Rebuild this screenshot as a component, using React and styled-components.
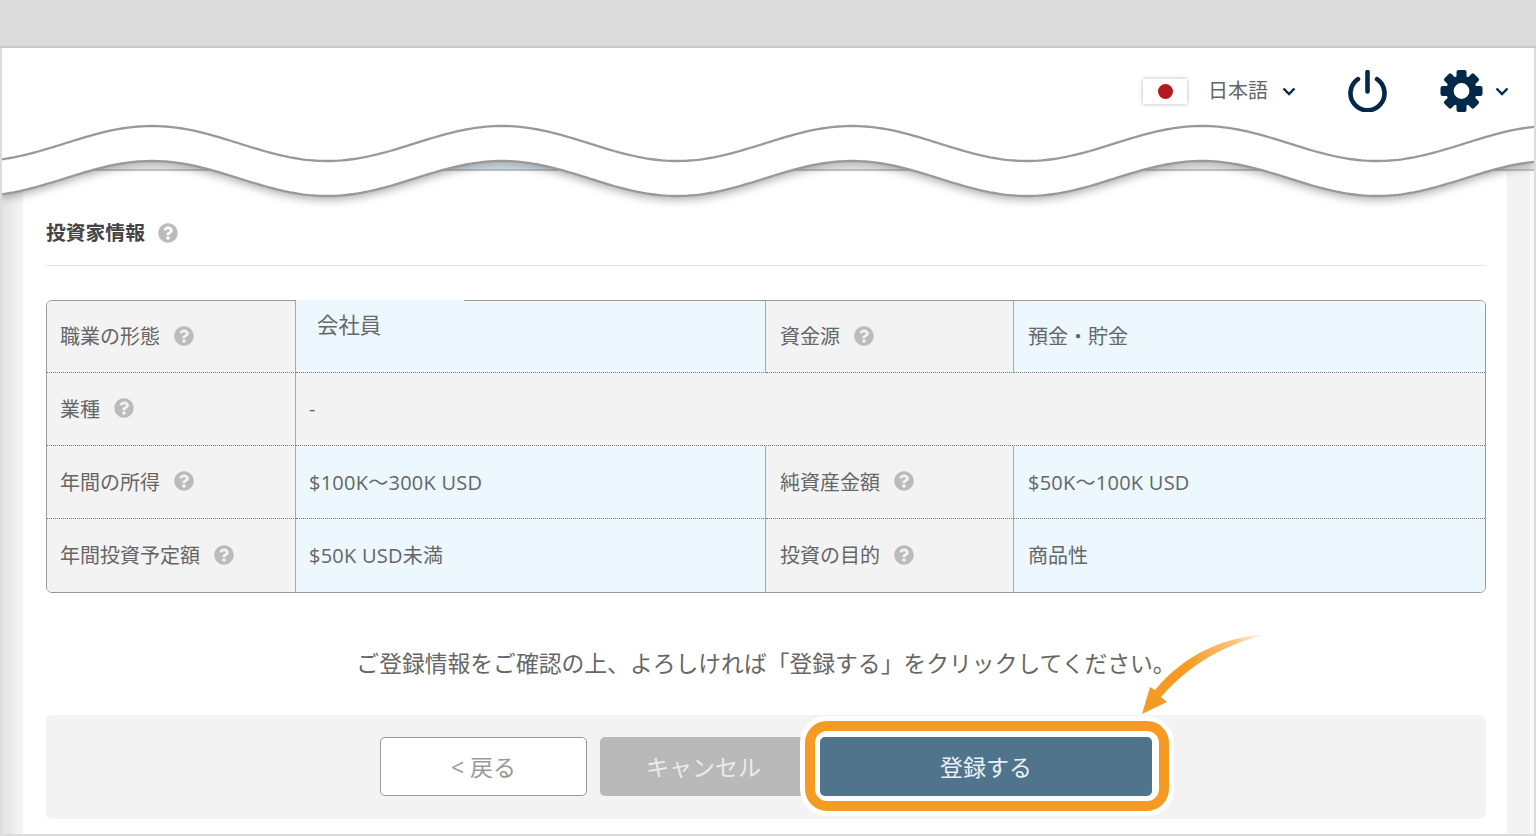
import React from 'react';
import styled, { createGlobalStyle } from 'styled-components';
import { FaQuestionCircle } from 'react-icons/fa';

const COLORS = {
  frame: '#dcdcdc',
  navy: '#03294a',
  text: '#666666',
  label: '#f3f3f3',
  value: '#ecf7fe',
  line: '#999999',
  orange: '#f59b23',
  primary: '#50748c',
};

const GlobalStyle = createGlobalStyle`
  html, body { margin: 0; padding: 0; background: #fff; }
  body {
    font-family: "Open Sans", "Noto Sans CJK JP", sans-serif;
    color: ${COLORS.text};
  }
`;

const Frame = styled.div`
  position: relative;
  width: 1536px;
  height: 836px;
  overflow: hidden;
  display: flex;
  flex-direction: column;
  background: ${COLORS.frame};
`;
const TopBar = styled.div`
  height: 46px;
  flex: none;
  background: ${COLORS.frame};
  border-bottom: 2px solid #c9c9c9;
`;
const Window = styled.div`
  flex: 1;
  margin: 0 2px 2px;
  display: flex;
  flex-direction: column;
  background: #fff;
`;
const Header = styled.header`
  height: 123px;
  flex: none;
  display: flex;
  justify-content: flex-end;
  align-items: flex-start;
  padding-right: 25px;
  background: #fff;
`;
const Controls = styled.div`
  height: 86px;
  display: flex;
  align-items: center;
`;
const Flag = styled.div`
  width: 44px;
  height: 25px;
  display: flex;
  align-items: center;
  justify-content: center;
  background: #fff;
  box-shadow: 0 0 4px rgba(0, 0, 0, 0.3);
  &::after {
    content: '';
    width: 15px;
    height: 15px;
    border-radius: 50%;
    background: #b5181e;
  }
`;
const Lang = styled.span`
  margin: 0 14px 0 21px;
  font-size: 20px;
  line-height: 26px;
  color: ${COLORS.text};
`;
const IconSlot = styled.span`
  display: flex;
  margin-left: ${(p) => p.$left}px;
`;
const Main = styled.main`
  flex: 1;
  display: flex;
  padding: 0 27px 0 21px;
  background: linear-gradient(90deg, #e2e2e2 0, #f3f3f3 18px, #f3f3f3 1528px, #fafafa 1528px);
`;
const Panel = styled.section`
  flex: 1;
  padding: 47px 21px 15px 23px;
  background: #fff;
`;
const Title = styled.h2`
  margin: 0 0 34px;
  height: 47px;
  display: flex;
  align-items: flex-start;
  gap: 13px;
  border-bottom: 1px solid #e4e4e4;
  font-size: 19.8px;
  line-height: 30px;
  font-weight: 700;
  color: #444444;
  svg { margin-top: 5px; }
`;
const Table = styled.table`
  width: 1440px;
  table-layout: fixed;
  border-collapse: separate;
  border-spacing: 0;
  border: 1px solid ${COLORS.line};
  border-radius: 6px;
  font-size: 20px;
  tr:first-child td { height: 72px; }
`;
const Cell = styled.td`
  position: relative;
  height: 73px;
  box-sizing: border-box;
  padding: 0 14px 2px;
  color: ${COLORS.text};
  border-bottom: 1px dotted #777;
  tr:last-child & { border-bottom: 0; }
  &:not(:last-child) { border-right: 1px solid #aaaaaa; }
  &:nth-child(1), &:nth-child(2) { padding-left: 13px; }
`;
const LabelCell = styled(Cell)`
  background: ${COLORS.label};
  tr:first-child &:first-child { border-top-left-radius: 5px; }
  tr:last-child &:first-child { border-bottom-left-radius: 5px; }
`;
const ValueCell = styled(Cell)`
  letter-spacing: ${(p) => (p.$latin ? '0.25px' : '0')};
  background: ${(p) => (p.$muted ? COLORS.label : COLORS.value)};
  tr:first-child &:last-child { border-top-right-radius: 5px; }
  tr:last-child &:last-child { border-bottom-right-radius: 5px; }
`;
const PatchedCell = styled(ValueCell)`
  vertical-align: top;
  && { padding: 9px 0 0 21px; }
  font-size: 21.4px;
  line-height: 30px;
  &::before {
    content: '';
    position: absolute;
    top: -1px;
    left: 0;
    width: 168px;
    height: 1px;
    background: ${COLORS.value};
  }
`;
const LabelInner = styled.span`
  display: inline-flex;
  align-items: center;
  gap: 14px;
`;
const Message = styled.p`
  margin: 54px 0 34px;
  text-align: center;
  font-size: 22.8px;
  line-height: 34px;
  color: ${COLORS.text};
`;
const ActionBar = styled.div`
  height: 104px;
  box-sizing: border-box;
  padding-bottom: 2px;
  display: flex;
  justify-content: center;
  align-items: center;
  gap: 13px;
  border-radius: 6px;
  background: #f3f3f3;
`;
const Button = styled.button`
  height: 59px;
  width: ${(p) => p.$width}px;
  box-sizing: border-box;
  padding: 0;
  border-radius: 5px;
  font-family: inherit;
  font-size: 23px;
`;
const BackButton = styled(Button)`
  background: #fff;
  border: 1px solid ${COLORS.line};
  color: #999999;
`;
const CancelButton = styled(Button)`
  background: #b9b9b9;
  border: 0;
  color: #ebebeb;
`;
const SubmitWrap = styled.div`
  position: relative;
  display: flex;
`;
const Ring = styled.span`
  position: absolute;
  top: -16px;
  left: -15px;
  right: -17px;
  bottom: -15px;
  border: 10px solid ${COLORS.orange};
  border-radius: 22px;
  background: #fff;
  box-shadow: 0 0 0 5px #fff;
`;
const SubmitButton = styled(Button)`
  position: relative;
  background: ${COLORS.primary};
  border: 0;
  color: #e9f0f4;
`;
const WaveArt = styled.svg`
  position: absolute;
  top: 120px;
  left: 2px;
  width: 1532px;
  height: 90px;
`;
const WaveBand = styled.path`
  fill: #fff;
  filter: drop-shadow(0 4px 4px rgba(0, 0, 0, 0.3));
`;
const ArrowArt = styled.svg`
  position: absolute;
  top: 630px;
  left: 1140px;
  width: 132px;
  height: 88px;
`;

// sine-ish edge, repeats every 350px, first crest at x=152
const waveLine = (mid) => {
  const pts = [];
  for (let x = 2; x <= 1534; x += 4) {
    const y = mid - 17.5 * Math.cos((2 * Math.PI * (x - 152)) / 350);
    pts.push(`${x} ${y.toFixed(1)}`);
  }
  return pts;
};

const Waves = () => {
  const top = waveLine(143.5);
  const bottom = waveLine(178.5);
  return (
    <WaveArt viewBox="2 120 1532 90">
      <defs>
        <linearGradient id="capGrey" x1="0" y1="0" x2="0" y2="1">
          <stop offset="0" stopColor="#ffffff" />
          <stop offset="1" stopColor="#e6e6e6" />
        </linearGradient>
        <linearGradient id="capBlue" x1="0" y1="0" x2="0" y2="1">
          <stop offset="0" stopColor="#e8f1f4" />
          <stop offset="1" stopColor="#cbdde5" />
        </linearGradient>
      </defs>
      <rect x="2" y="160" width="1532" height="10" fill="url(#capGrey)" />
      <rect x="430" y="160" width="146" height="10" fill="url(#capBlue)" />
      <rect x="2" y="169.5" width="1532" height="1.2" fill="#aaaaaa" />
      <WaveBand d={`M2 120 L${bottom.join(' L')} L1534 120 Z`} />
      <path d={`M${top.join(' L')}`} fill="none" stroke="#999" strokeWidth="2.3" />
      <path d={`M${bottom.join(' L')}`} fill="none" stroke="#999" strokeWidth="2.3" />
    </WaveArt>
  );
};

const Chevron = () => (
  <svg width="14" height="9" viewBox="0 0 14 9">
    <path d="M1.5 1.5 7 7l5.5-5.5" fill="none" stroke={COLORS.navy} strokeWidth="2.4" />
  </svg>
);

const PowerIcon = () => (
  <svg width="39" height="42" viewBox="0 0 39 42">
    <path d="M10 9.2a17 17 0 1 0 19 0" fill="none" stroke={COLORS.navy} strokeWidth="4.6" strokeLinecap="round" />
    <path d="M19.5 2v19.5" fill="none" stroke={COLORS.navy} strokeWidth="4.6" strokeLinecap="round" />
  </svg>
);

const GearIcon = () => (
  <svg width="43" height="42" viewBox="-21.5 -21 43 42">
    {[0, 45, 90, 135, 180, 225, 270, 315].map((deg) => (
      <rect key={deg} x="-5" y="-21" width="10" height="10" rx="2" fill={COLORS.navy} transform={`rotate(${deg})`} />
    ))}
    <circle r="11.6" fill="none" stroke={COLORS.navy} strokeWidth="7.4" />
  </svg>
);

const Arrow = () => (
  <ArrowArt viewBox="1140 630 132 88">
    <defs>
      <linearGradient id="arrowFade" gradientUnits="userSpaceOnUse" x1="1150" y1="700" x2="1270" y2="634">
        <stop offset="0.35" stopColor={COLORS.orange} />
        <stop offset="0.75" stopColor="#f9c57c" />
        <stop offset="1" stopColor="#fdeacf" stopOpacity="0.2" />
      </linearGradient>
    </defs>
    <path
      d="M1270 634C1226 636 1186 653 1155 690L1150 687L1142 714L1167 702L1161 697C1190 664 1226 643 1270 634Z"
      fill="url(#arrowFade)"
    />
  </ArrowArt>
);

const Help = () => <FaQuestionCircle size={20} color="#bbbbbb" />;

const Label = ({ children }) => (
  <LabelCell>
    <LabelInner>
      {children}
      <Help />
    </LabelInner>
  </LabelCell>
);

export default function App() {
  return (
    <Frame>
      <GlobalStyle />
      <TopBar />
      <Window>
        <Header>
          <Controls>
            <Flag />
            <Lang>日本語</Lang>
            <Chevron />
            <IconSlot $left={52}>
              <PowerIcon />
            </IconSlot>
            <IconSlot $left={53}>
              <GearIcon />
            </IconSlot>
            <IconSlot $left={12}>
              <Chevron />
            </IconSlot>
          </Controls>
        </Header>
        <Main>
          <Panel>
            <Title>
              投資家情報
              <Help />
            </Title>
            <Table>
              <colgroup>
                <col width="249" />
                <col width="470" />
                <col width="248" />
                <col width="471" />
              </colgroup>
              <tbody>
                <tr>
                  <Label>職業の形態</Label>
                  <PatchedCell>会社員</PatchedCell>
                  <Label>資金源</Label>
                  <ValueCell>預金・貯金</ValueCell>
                </tr>
                <tr>
                  <Label>業種</Label>
                  <ValueCell $muted colSpan={3}>-</ValueCell>
                </tr>
                <tr>
                  <Label>年間の所得</Label>
                  <ValueCell $latin>$100K～300K USD</ValueCell>
                  <Label>純資産金額</Label>
                  <ValueCell $latin>$50K～100K USD</ValueCell>
                </tr>
                <tr>
                  <Label>年間投資予定額</Label>
                  <ValueCell $latin>$50K USD未満</ValueCell>
                  <Label>投資の目的</Label>
                  <ValueCell>商品性</ValueCell>
                </tr>
              </tbody>
            </Table>
            <Message>ご登録情報をご確認の上、よろしければ「登録する」をクリックしてください。</Message>
            <ActionBar>
              <BackButton $width={207}>&lt; 戻る</BackButton>
              <CancelButton $width={207}>キャンセル</CancelButton>
              <SubmitWrap>
                <Ring />
                <SubmitButton $width={332}>登録する</SubmitButton>
              </SubmitWrap>
            </ActionBar>
          </Panel>
        </Main>
      </Window>
      <Waves />
      <Arrow />
    </Frame>
  );
}
